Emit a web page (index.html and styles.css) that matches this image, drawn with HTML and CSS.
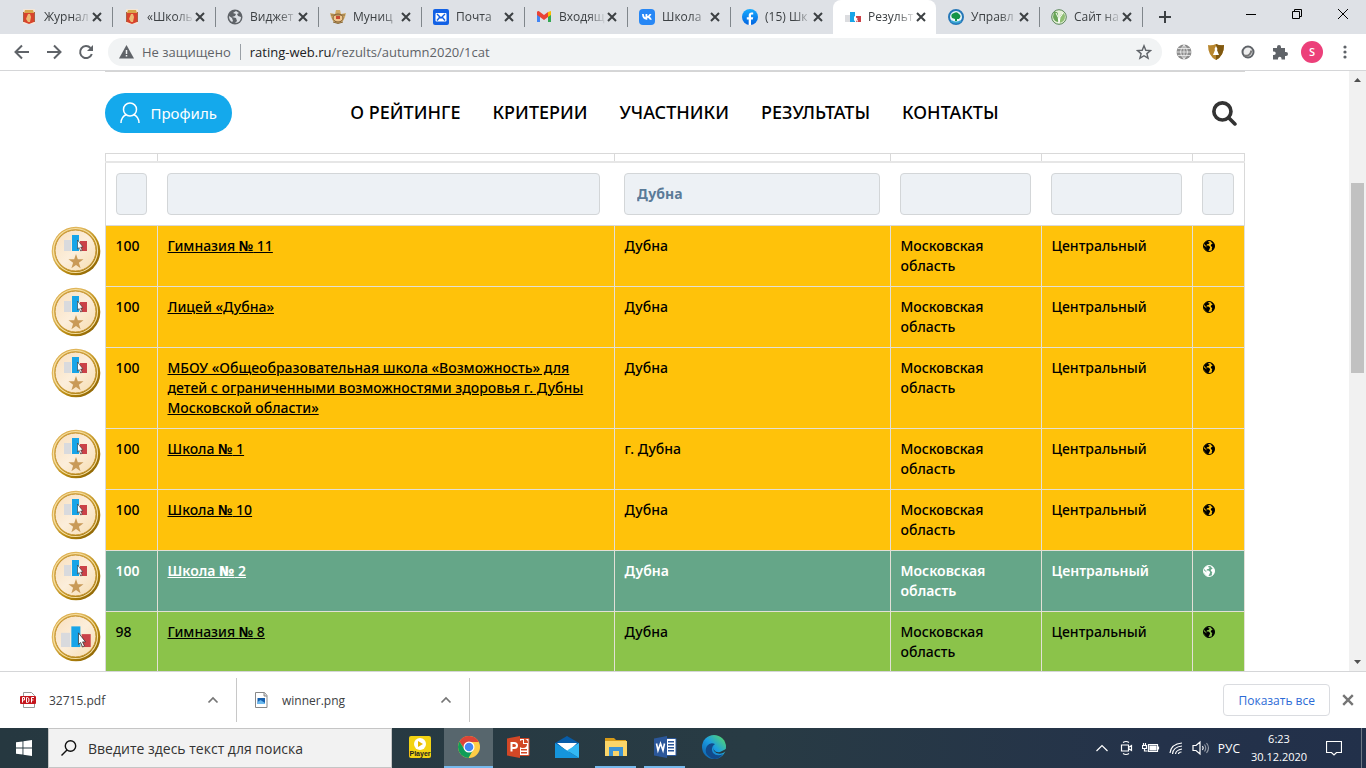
FILE: index.html
```html
<!DOCTYPE html>
<html lang="ru">
<head>
<meta charset="utf-8">
<title>Результаты</title>
<link rel="stylesheet" href="styles.css">
</head>
<body>
<svg class="defs" aria-hidden="true">
  <defs>
    <linearGradient id="gold" x1="0" y1="0" x2="1" y2="1"><stop offset="0" stop-color="#d39a2c"/><stop offset=".3" stop-color="#e3bb62"/><stop offset=".6" stop-color="#b98a10"/><stop offset="1" stop-color="#7d5700"/></linearGradient>
    <linearGradient id="cream" x1="0" y1="0" x2="1" y2="1"><stop offset="0" stop-color="#f8dfbd"/><stop offset=".5" stop-color="#fceedb"/><stop offset="1" stop-color="#f6dcae"/></linearGradient>
    <linearGradient id="fb" x1="0" y1="0" x2="0" y2="1"><stop offset="0" stop-color="#18acfe"/><stop offset="1" stop-color="#0163e0"/></linearGradient>
    <linearGradient id="edge" x1="0" y1="1" x2="1" y2="0"><stop offset="0" stop-color="#0c59a4"/><stop offset=".5" stop-color="#1b9de2"/><stop offset="1" stop-color="#5fe05a"/></linearGradient>
    <symbol id="x" viewBox="0 0 10 10"><path d="M1 1l8 8M9 1L1 9" fill="none" stroke="currentColor" stroke-width="2"/></symbol>
    <symbol id="up" viewBox="0 0 12 8"><path d="M1.500 6.500L6 2l4.500 4.500" fill="none" stroke="currentColor" stroke-width="1.700"/></symbol>
    <symbol id="bars" viewBox="0 0 24 18"><path fill="#d9dadd" d="M0 5h7v11H0z"/><path fill="#18a5e8" d="M8 0h7v16H8z"/><path fill="#cb4248" d="M16 6h7v10h-7z"/><path fill="#fff" stroke="#333" stroke-width=".6" d="M13.500 5v9l1.700-1.500 1.500 3.500 1.500-.7-1.500-3.300h2.300z"/></symbol>
    <symbol id="coin" viewBox="0 0 50 50"><circle cx="25" cy="25" r="24.300" fill="url(#gold)"/><circle cx="24.500" cy="24.500" r="22" fill="none" stroke="#f5dfa3" stroke-width="1.200"/><circle cx="24.500" cy="24.500" r="20.500" fill="url(#cream)" stroke="#c4922d"/></symbol>
    <symbol id="medal-star" viewBox="0 0 50 50"><use href="#coin" width="50" height="50"/><use href="#bars" x="13" y="9" width="24" height="18"/><path fill="#c99a58" d="M25 28l1.800 5.300h5.700l-4.600 3.400 1.700 5.500-4.600-3.300-4.600 3.300 1.700-5.500-4.600-3.400h5.700z"/></symbol>
    <symbol id="medal" viewBox="0 0 50 50"><use href="#coin" width="50" height="50"/><use href="#bars" x="10" y="14" width="31" height="24"/></symbol>
    <symbol id="globe" viewBox="0 0 12 12"><circle cx="6" cy="6" r="5.500" fill="none" stroke="currentColor"/><path fill="currentColor" d="M1 3.500Q2.500.8 6 .5L5 2l1.800.8L5.500 4 4 4.200 3.500 5.500h2L7.200 7 6.500 9l-1.300 2.400L3 10.500 1.200 8 .5 5 2.500 6.500 4 7.500zM7.500.7Q11.400 2 11.500 6q0 3-2.500 5L8.800 8.500 9.300 7 7.800 6 8 4.500l1.700-.7L8.500 2.500z"/></symbol>
    <symbol id="crest" viewBox="0 0 16 16"><path fill="#f4e6d8" d="M2 0h12v15H2z"/><path fill="#d9a64a" d="M4 1h8l1 3H3z"/><path fill="#d8432c" d="M3 4h10v9l-5 2-5-2z"/><path fill="#ecba73" d="M7 5h2l1 3-1 5H7l-2-3z"/><path stroke="#aa6041" fill="none" d="M2.500 3v10M13.500 3v10"/></symbol>
  </defs>
</svg>

<header class="tabs">
  <div class="tab"><svg class="fav" viewBox="0 0 16 16"><use href="#crest" width="16" height="16"/></svg><span class="tab-title">Журнал</span><button class="close" aria-label="Закрыть вкладку"><svg><use href="#x"/></svg></button></div>
  <div class="tab"><svg class="fav" viewBox="0 0 16 16"><use href="#crest" width="16" height="16"/></svg><span class="tab-title">«Школь</span><button class="close" aria-label="Закрыть вкладку"><svg><use href="#x"/></svg></button></div>
  <div class="tab"><svg class="fav" viewBox="0 0 16 16"><circle cx="8" cy="8" r="7.500" fill="#5f6368"/><path fill="#dee1e6" d="M9 2l-3 2 3 1-1 2-3 1 4 1 1 3-2 2c4 0 6-3 6-6l-3-1-1-2 2-1zM2 7l3 2 1 3-1 1C3 12 2 10 2 7z"/></svg><span class="tab-title">Виджет</span><button class="close" aria-label="Закрыть вкладку"><svg><use href="#x"/></svg></button></div>
  <div class="tab"><svg class="fav" viewBox="0 0 16 16"><path fill="#d0aa67" d="M0 4l5 1 1-4h4l1 4 5-1-1 4-2 4-2 2H5l-2-2-2-4z"/><ellipse cx="8" cy="9" rx="5" ry="4" fill="#f1c78c" stroke="#7c5b34"/><path fill="#c94a32" d="M6 7h4v3H6z"/><path d="M3 13q5 3 10 0M1 6h14" fill="none" stroke="#8a6a3a"/></svg><span class="tab-title">Муниц</span><button class="close" aria-label="Закрыть вкладку"><svg><use href="#x"/></svg></button></div>
  <div class="tab"><svg class="fav" viewBox="0 0 16 16"><rect width="16" height="16" rx="2" fill="#1261e5"/><rect x="2.500" y="4" width="11" height="8.500" rx="1" fill="#fff"/><path d="M4 5l4 4 4-4M4 11.500l2.500-3M12 11.500l-2.500-3" fill="none" stroke="#1261e5" stroke-width="1.400"/></svg><span class="tab-title">Почта</span><button class="close" aria-label="Закрыть вкладку"><svg><use href="#x"/></svg></button></div>
  <div class="tab"><svg class="fav" viewBox="0 0 16 16"><path fill="#4285f4" d="M1 4h3v9H1z"/><path fill="#34a853" d="M12 4h3v9h-3z"/><path fill="#fbbc04" d="M12 3l3-1v4l-3 2z"/><path fill="#ea4335" d="M1 3q1-2 3 0l4 3 4-3v5l-4 3-4-3-3-2z"/></svg><span class="tab-title">Входящ</span><button class="close" aria-label="Закрыть вкладку"><svg><use href="#x"/></svg></button></div>
  <div class="tab"><svg class="fav" viewBox="0 0 16 16"><rect width="16" height="16" rx="4" fill="#2787f5"/><path fill="#fff" d="M3 5h1.800c.1 2 .8 3 1.700 3.200V5h1.800v2C9.500 6.800 10 6 10.500 5h1.900c-.3 1.200-1 2.200-1.900 2.800 1 .5 1.800 1.400 2.300 2.900h-2c-.4-1-1.200-1.700-2.500-1.900v1.900C5 11 3.200 9 3 5z"/></svg><span class="tab-title">Школа</span><button class="close" aria-label="Закрыть вкладку"><svg><use href="#x"/></svg></button></div>
  <div class="tab no-line"><svg class="fav" viewBox="0 0 16 16"><circle cx="8" cy="8" r="8" fill="url(#fb)"/><path fill="#fff" d="M6.700 16v-5.500H4.800V8.200h1.900V6.500c0-2 1.200-3 2.900-3l1.600.1v2H10c-.8 0-1 .4-1 1v1.600h2.200l-.4 2.300H9V16z"/></svg><span class="tab-title">(15) Шк</span><button class="close" aria-label="Закрыть вкладку"><svg><use href="#x"/></svg></button></div>
  <div class="tab active"><svg class="fav" viewBox="0 0 16 16"><path fill="#dcdde0" d="M0 6h5v7H0z"/><path fill="#18a5e8" d="M5 3h5v10H5z"/><path fill="#cb4248" d="M11 7h5v6h-5z"/><path fill="#fff" d="M9 7v5l2-1 1 2 1-1-1-2h1z"/></svg><span class="tab-title">Результ</span><button class="close" aria-label="Закрыть вкладку"><svg><use href="#x"/></svg></button></div>
  <div class="tab"><svg class="fav" viewBox="0 0 16 16"><circle cx="8" cy="8" r="7" fill="#e9f6fb" stroke="#2778b8" stroke-width="2"/><path fill="#159447" d="M4 9q-2-4 2-5 3-2 5 1 3 2 0 5H9v2H7v-2z"/><path d="M3 12q5 3 10 0" stroke="#35a4d4" fill="none" stroke-width="2"/></svg><span class="tab-title">Управл</span><button class="close" aria-label="Закрыть вкладку"><svg><use href="#x"/></svg></button></div>
  <div class="tab"><svg class="fav" viewBox="0 0 16 16"><circle cx="8" cy="8" r="7.300" fill="#e4efd6" stroke="#598657"/><path fill="#6aa557" d="M3 3q4-1 4 3l1 7Q3 13 2 8z"/><path fill="#8fbf72" d="M13 4q-4 1-4 5l-1 5q6-1 6-7z"/><path d="M5 4q3 4 3 10 0-6 4-10" fill="none" stroke="#fff"/></svg><span class="tab-title">Сайт на</span><button class="close" aria-label="Закрыть вкладку"><svg><use href="#x"/></svg></button></div>
  <button class="new-tab" aria-label="Новая вкладка"><svg viewBox="0 0 12 12"><path d="M6 0v12M0 6h12" stroke="#3c4043" stroke-width="2"/></svg></button>
  <div class="window-buttons">
    <button aria-label="Свернуть"><svg viewBox="0 0 10 10"><path d="M0 5.500h10"/></svg></button>
    <button aria-label="Восстановить"><svg viewBox="0 0 10 10"><path d="M.5 2.500h7v7h-7zM2.500 2.500v-2h7v7h-2"/></svg></button>
    <button aria-label="Закрыть"><svg viewBox="0 0 10 10"><path d="M0 0l10 10M10 0L0 10"/></svg></button>
  </div>
</header>

<div class="toolbar">
  <button class="tool" aria-label="Назад"><svg viewBox="0 0 16 16"><path d="M15 8H2M8 1.500L1.500 8 8 14.500"/></svg></button>
  <button class="tool" aria-label="Вперёд"><svg viewBox="0 0 16 16"><path d="M1 8h13M8 1.500L14.500 8 8 14.500"/></svg></button>
  <button class="tool" aria-label="Обновить"><svg viewBox="0 0 16 16"><path d="M13.800 10A6 6 0 1 1 12.500 4"/><path class="solid" d="M15 1v6H9z"/></svg></button>
  <div class="omnibox">
    <svg class="warning" viewBox="0 0 15 14"><path fill="#5f6368" d="M7.500 0L15 13.500H0z"/><path stroke="#f1f3f4" stroke-width="1.500" d="M7.500 5v4M7.500 10v1.500"/></svg>
    <span class="insecure">Не защищено</span>
    <span class="url"><b>rating-web.ru</b>/rezults/autumn2020/1cat</span>
    <button class="star" aria-label="Добавить в закладки"><svg viewBox="0 0 16 16"><path d="M8 1.800l1.800 4.500 4.700.3-3.600 3 1.200 4.600L8 11.700l-4.100 2.500 1.200-4.600-3.600-3 4.700-.3z" fill="none" stroke="#5f6368" stroke-width="1.400"/></svg></button>
  </div>
  <div class="extensions">
    <button aria-label="Сеть"><svg viewBox="0 0 16 16"><circle cx="8" cy="8" r="7.500" fill="#8e8e8e"/><path d="M8 0v16M0 8h16M2 4.500h12M2 11.500h12M8 1q-7 7 0 14M8 1q7 7 0 14" fill="none" stroke="#f2f2f2" stroke-width=".8"/></svg></button>
    <button aria-label="Щит"><svg viewBox="0 0 16 16"><path fill="#b8862d" d="M0 1q4 1 8-1 4 2 8 1 0 11-8 15Q0 12 0 1z"/><path fill="#805810" d="M8 0q4 2 8 1 0 11-8 15z"/><path fill="#fff" d="M8 2l1.500 3-.5 1 2 5H5l2-5-.5-1z"/></svg></button>
    <button aria-label="Кольцо"><svg viewBox="0 0 16 16"><circle cx="8" cy="8" r="5.500" fill="#eee" stroke="#5f6368" stroke-width="2"/><path d="M4 11.500q6 1.500 7.500-5" fill="none" stroke="#777" stroke-width="2"/></svg></button>
    <button aria-label="Расширения"><svg viewBox="0 0 16 16"><path fill="#5f6368" d="M1 4h4V3a2 2 0 0 1 4 0v1h4v4h1a2 2 0 0 1 0 4h-1v3.500H9.500v-1a1.700 1.700 0 0 0-3.500 0v1H1V11h1a1.700 1.700 0 0 0 0-3.500H1z"/></svg></button>
    <button class="avatar">S</button>
    <button aria-label="Меню"><svg viewBox="0 0 16 16"><g fill="#5f6368"><circle cx="8" cy="3" r="1.600"/><circle cx="8" cy="8" r="1.600"/><circle cx="8" cy="13" r="1.600"/></g></svg></button>
  </div>
</div>

<div class="viewport">
  <main class="site">
    <div class="container">
      <div class="site-header">
        <div><button class="profile"><svg viewBox="0 0 20 22"><circle cx="10" cy="7.500" r="6.500"/><path d="M1 21q0-6 5.500-8.500M19 21q0-6-5.500-8.500"/></svg>Профиль</button></div>
        <nav class="menu"><a href="#">О РЕЙТИНГЕ</a><a href="#">КРИТЕРИИ</a><a href="#">УЧАСТНИКИ</a><a href="#">РЕЗУЛЬТАТЫ</a><a href="#">КОНТАКТЫ</a></nav>
        <button class="search" aria-label="Поиск"><svg viewBox="0 0 24 24"><circle cx="10" cy="10" r="8.200"/><path d="M16 16l6 6" stroke-linecap="round"/></svg></button>
      </div>
      <table class="results">
        <colgroup><col class="c-score"><col><col class="c-city"><col class="c-area"><col class="c-area"><col class="c-score"></colgroup>
        <thead>
          <tr class="stub"><th></th><th></th><th></th><th></th><th></th><th></th></tr>
          <tr class="filters"><td><input aria-label="Баллы"></td><td class="name"><input aria-label="Школа"></td><td><input aria-label="Город" value="Дубна"></td><td><input aria-label="Регион"></td><td><input aria-label="Округ"></td><td><input aria-label="Сайт"></td></tr>
        </thead>
        <tbody>
          <tr class="gold"><td><svg class="medal"><use href="#medal-star"/></svg>100</td><td><a href="#">Гимназия <b>№</b> 11</a></td><td>Дубна</td><td>Московская область</td><td>Центральный</td><td><a href="#" aria-label="Сайт"><svg class="globe"><use href="#globe"/></svg></a></td></tr>
          <tr class="gold"><td><svg class="medal"><use href="#medal-star"/></svg>100</td><td><a href="#">Лицей «Дубна»</a></td><td>Дубна</td><td>Московская область</td><td>Центральный</td><td><a href="#" aria-label="Сайт"><svg class="globe"><use href="#globe"/></svg></a></td></tr>
          <tr class="gold"><td><svg class="medal"><use href="#medal-star"/></svg>100</td><td><a href="#">МБОУ «Общеобразовательная школа «Возможность» для детей с ограниченными возможностями здоровья г. Дубны Московской области»</a></td><td>Дубна</td><td>Московская область</td><td>Центральный</td><td><a href="#" aria-label="Сайт"><svg class="globe"><use href="#globe"/></svg></a></td></tr>
          <tr class="gold"><td><svg class="medal"><use href="#medal-star"/></svg>100</td><td><a href="#">Школа <b>№</b> 1</a></td><td>г. Дубна</td><td>Московская область</td><td>Центральный</td><td><a href="#" aria-label="Сайт"><svg class="globe"><use href="#globe"/></svg></a></td></tr>
          <tr class="gold"><td><svg class="medal"><use href="#medal-star"/></svg>100</td><td><a href="#">Школа <b>№</b> 10</a></td><td>Дубна</td><td>Московская область</td><td>Центральный</td><td><a href="#" aria-label="Сайт"><svg class="globe"><use href="#globe"/></svg></a></td></tr>
          <tr class="current"><td><svg class="medal"><use href="#medal-star"/></svg>100</td><td><a href="#">Школа <b>№</b> 2</a></td><td>Дубна</td><td>Московская область</td><td>Центральный</td><td><a href="#" aria-label="Сайт"><svg class="globe"><use href="#globe"/></svg></a></td></tr>
          <tr class="green"><td><svg class="medal"><use href="#medal"/></svg>98</td><td><a href="#">Гимназия <b>№</b> 8</a></td><td>Дубна</td><td>Московская область</td><td>Центральный</td><td><a href="#" aria-label="Сайт"><svg class="globe"><use href="#globe"/></svg></a></td></tr>
        </tbody>
      </table>
    </div>
  </main>
  <div class="scrollbar">
    <svg viewBox="0 0 17 17"><path d="M5 11l3.500-4 3.500 4z"/></svg>
    <div class="track"><div class="thumb"></div></div>
    <svg viewBox="0 0 17 17"><path d="M5 6l3.500 4L12 6z"/></svg>
  </div>
</div>

<div class="downloads">
  <div class="file pdf"><svg viewBox="0 0 16 16"><path fill="#fff" stroke="#999" d="M3.500.5h8l3 3v12h-11z"/><rect y="4" width="16" height="8" rx="1" fill="#c5161d"/><path stroke="#fff" fill="none" d="M2.500 10.500v-5h2v2.500h-2M6.500 5.500v5h1q1.500 0 1.500-2.500T7.500 5.500zM11.500 10.500v-5H14M11.500 8h2"/></svg><span>32715.pdf</span><button aria-label="Действия"><svg><use href="#up"/></svg></button></div>
  <div class="file"><svg viewBox="0 0 16 16"><path fill="#fff" stroke="#888" d="M2.500.5h9l2.500 3v12H2.500z"/><path fill="#d8d8d8" stroke="#888" d="M11 .5V4h3"/><path fill="#155fae" d="M4.500 6h7.500v6H4.500z"/><path fill="#6bb9ee" d="M4.500 10l3-2 4.500 3v1H4.500z"/></svg><span>winner.png</span><button aria-label="Действия"><svg><use href="#up"/></svg></button></div>
  <button class="show-all">Показать все</button>
  <button class="hide-bar" aria-label="Закрыть панель"><svg><use href="#x"/></svg></button>
</div>

<footer class="taskbar">
  <button class="start" aria-label="Пуск"><svg viewBox="0 0 16 16"><path fill="#fff" d="M0 2.300L6.500 1.400v6.200H0zM7.400 1.300L16 0v7.600H7.400zM0 8.400h6.500v6.200L0 13.700zM7.400 8.400H16V16l-8.600-1.300z"/></svg></button>
  <label class="task-search"><svg viewBox="0 0 16 16"><circle cx="9.500" cy="6" r="5.200"/><path d="M6 10l-5.500 5.500"/></svg><input aria-label="Поиск Windows" placeholder="Введите здесь текст для поиска"></label>
  <div class="apps">
    <button aria-label="Player"><svg viewBox="0 0 24 24"><rect x="1" y="1" width="22" height="22" rx="2" fill="#f3d313"/><circle cx="12" cy="9" r="6" fill="#fff"/><path fill="#e8b800" d="M10 6l5 3-5 3z"/><text x="12" y="21" text-anchor="middle" class="tiny">Player</text></svg></button>
    <button class="open on" aria-label="Chrome"><svg viewBox="0 0 24 24"><circle cx="12" cy="12" r="11" fill="#ffcd46"/><path fill="#db4437" d="M2.500 6.500A11 11 0 0 1 21.800 7H12l-4.500 7z"/><path fill="#0f9d58" d="M2.500 6.500A11 11 0 0 0 11.500 23l4.800-8.500L12 17q-3 0-4.500-2.500z"/><circle cx="12" cy="12" r="5.500" fill="#fff"/><circle cx="12" cy="12" r="4.300" fill="#4285f4"/></svg></button>
    <button aria-label="PowerPoint"><svg viewBox="0 0 24 24"><path fill="#fff" stroke="#d24726" d="M12 3.500h11v17H12z"/><path fill="#d24726" d="M1 3.500L14 1v22L1 20.500zM15 14h6v1.500h-6zM15 17h6v1.500h-6zM17 5v4h4a4 4 0 1 1-4-4zM18 4q4 0 4 4h-4z"/><path d="M5.500 16.500V8H8q3 0 3 2.500T8 13H5.500" fill="none" stroke="#fff" stroke-width="2"/></svg></button>
    <button aria-label="Почта"><svg viewBox="0 0 24 24"><path fill="#075ca8" d="M0 8l12-7 12 7v4H0z"/><path fill="#fff" d="M2 8h20l-9 9z"/><path fill="#1595dc" d="M0 8l24 15H0z"/><path fill="#32b9f4" d="M24 8L12 15.500 24 23z"/></svg></button>
    <button class="open" aria-label="Проводник"><svg viewBox="0 0 24 24"><path fill="#d89b18" d="M1 3h9l2 2h10v3H1z"/><path fill="#fbd568" d="M1 6h22v15H1z"/><path fill="#3c93d3" d="M5 12h14v9h-4v-5H9v5H5z"/></svg></button>
    <button class="open" aria-label="Word"><svg viewBox="0 0 24 24"><path fill="#fff" stroke="#2b579a" d="M12 3.500h11v17H12z"/><path fill="#2b579a" d="M1 3.500L14 1v22L1 20.500zM15 6h6v1.500h-6zM15 9h6v1.500h-6zM15 12h6v1.500h-6zM15 15h6v1.500h-6z"/><path d="M3.500 8.500l1.500 7 2.500-7 2.500 7 1.500-7" fill="none" stroke="#fff" stroke-width="1.600"/></svg></button>
    <button aria-label="Edge"><svg viewBox="0 0 24 24"><circle cx="12" cy="12" r="12" fill="url(#edge)"/><path fill="#114a8b" d="M9 23Q1 18 5 11q3-4 8-2-5 3-2 9 4 4 10 1-5 7-12 4z"/><path fill="#263840" d="M13 9q-3 2-1 6 2 3 6 2l6-3v2l-3 2q-6 2-9-2-2-5 1-7z"/></svg></button>
  </div>
  <div class="tray">
    <svg viewBox="0 0 16 16"><path d="M2.500 11L8 5.500l5.500 5.500"/></svg>
    <svg viewBox="0 0 16 16"><path d="M3.500 5h7v6h-7zM10.500 7.500l3-2v5l-3-2M5 2.500q3-2 6 0M5 13.500q3 2 6 0"/></svg>
    <svg class="battery" viewBox="0 0 18 16"><path d="M6.500 4.500h9v7h-9zM16.500 6.500v3"/><path d="M8 6h6v4H8z" fill="#fff"/><path d="M.5 5.500h4v3h-4zM1.500 3v2M3.500 3v2M2.500 9v2h3"/></svg>
    <svg viewBox="0 0 16 16"><path d="M2 13Q3 4 14 3M4.500 14Q5 7 14 6M7.500 14Q8 10 14 9M10.500 14q0-2 3-2"/></svg>
    <svg class="volume" viewBox="0 0 18 16"><path d="M1 5.500h3l4-3.500v12l-4-3.500H1zM10.500 6q1.500 2 0 4"/><path d="M12.500 4.500q2.500 3.500 0 7M14.500 3q4 5 0 10" opacity=".5"/></svg>
    <span class="lang">РУС</span>
    <div class="clock"><time>6:23</time><time>30.12.2020</time></div>
    <button class="notes" aria-label="Уведомления"><svg viewBox="0 0 16 16"><path d="M.5 1.500h15v11h-5L8 15l-2.500-2.500h-5z"/></svg></button>
  </div>
</footer>
</body>
</html>
```
FILE: styles.css
```css
* { box-sizing: border-box; }
body { margin: 0; height: 100vh; display: flex; flex-direction: column; overflow: hidden; background: #fff; font-family: "Open Sans", "Noto Sans", sans-serif; font-size: 12px; color: #3c4043; }
button { border: 0; padding: 0; margin: 0; background: none; font: inherit; color: inherit; display: flex; align-items: center; justify-content: center; }
input { font: inherit; min-width: 0; }
svg { display: block; flex: none; }
.defs { position: absolute; width: 0; height: 0; }

.tabs { height: 34px; flex: none; display: flex; align-items: stretch; background: #dee1e6; padding-left: 9px; }
.tab { width: 103px; flex: none; display: flex; align-items: center; padding: 0 10px 0 12px; position: relative; }
.tab::after { content: ""; position: absolute; right: -1px; top: 7px; height: 20px; width: 1px; background: #80868b; }
.tab.no-line::after, .tab.active::after { display: none; }
.tab.active { background: #fff; border-radius: 8px 8px 0 0; }
.fav { width: 16px; height: 16px; margin-right: 7px; }
.tab-title { flex: 1; min-width: 0; white-space: nowrap; line-height: 18px; -webkit-mask-image: linear-gradient(to right, #000 60%, transparent); mask-image: linear-gradient(to right, #000 60%, transparent); }
.close svg { width: 10px; height: 10px; }
.new-tab { width: 46px; }
.new-tab svg { width: 12px; height: 12px; }
.window-buttons { margin-left: auto; display: flex; height: 28px; }
.window-buttons button { width: 46px; }
.window-buttons svg { width: 10px; height: 10px; fill: none; stroke: #000; overflow: visible; }

.toolbar { height: 37px; flex: none; display: flex; align-items: center; padding: 0 11px 1px 6px; border-bottom: 1px solid #d5d6d8; }
.tool { width: 32px; height: 28px; }
.tool svg { width: 16px; height: 16px; fill: none; stroke: #5f6368; stroke-width: 2; }
.tool .solid { fill: #5f6368; stroke: none; }
.omnibox { flex: 1; height: 28px; margin-left: 6px; border-radius: 14px; background: #f1f3f4; display: flex; align-items: center; padding: 0 10px 0 11px; font-size: 13px; color: #5f6368; }
.warning { width: 15px; height: 14px; margin-right: 8px; }
.insecure { padding-right: 9px; border-right: 1px solid #9aa0a6; line-height: 16px; }
.url { margin-left: 9px; flex: 1; }
.url b { font-weight: 400; color: #202124; }
.star svg { width: 16px; height: 16px; }
.extensions { display: flex; align-items: center; margin-left: 6px; }
.extensions button { width: 32px; height: 28px; }
.extensions button:last-child { width: 20px; margin-left: 12px; }
.extensions svg { width: 16px; height: 16px; }
.extensions .avatar { width: 22px; height: 22px; margin-left: 5px; border-radius: 50%; background: #ec407a; color: #fff; font-size: 11px; font-weight: 600; }

.viewport { flex: 1; min-height: 0; display: flex; }
.site { flex: 1; overflow: hidden; color: #000; font-family: "Noto Sans", "Open Sans", sans-serif; }
.container { max-width: 1140px; margin: 0 auto; }
.site-header { display: grid; grid-template-columns: 1fr auto 1fr; align-items: center; border-top: 1px solid #d5d5d5; padding: 21px 0 20px; }
.profile { height: 40px; padding: 0 15px; gap: 11px; border-radius: 20px; background: #14a9ec; color: #fff; font-size: 15px; }
.profile svg { width: 20px; height: 22px; fill: none; stroke: #fff; stroke-width: 1.5; }
.menu { display: flex; gap: 32px; padding-bottom: 2px; font-size: 18px; font-weight: 500; line-height: 24px; }
.menu a { color: #000; text-decoration: none; }
.search { justify-self: end; margin-right: 8px; }
.search svg { width: 25px; height: 25px; fill: none; stroke: #333; stroke-width: 3.5; }

.results { width: 100%; table-layout: fixed; border-collapse: collapse; font-size: 14px; line-height: 20px; font-weight: 500; }
.c-score { width: 52px; }
.c-city { width: 276px; }
.c-area { width: 151px; }
.results th, .results td { border: 1px solid #d9d9d9; padding: 10px; text-align: left; vertical-align: top; }
.results .stub th { height: 8px; padding: 0; border-bottom: 2px solid #e6e6e6; }
.results .filters td { border-left: 0; border-right: 0; }
.results .filters td:first-child { border-left: 1px solid #d9d9d9; }
.results .filters td:last-child { border-right: 1px solid #d9d9d9; }
.results .filters .name { padding-right: 14px; }
.filters input { display: block; width: 100%; height: 42px; padding: 0 12px; border: 1px solid #d3d6d8; border-radius: 4px; background: #edf1f5; color: #5b7b98; font-weight: 700; }
.results tbody td { border-color: #e3e0d6; }
.results tbody td:first-child { position: relative; border-left-color: #d9d9d9; }
.results a { color: inherit; }
.medal { position: absolute; left: -55px; top: 0; width: 50px; height: 50px; }
.globe { width: 12px; height: 12px; margin-top: 4px; }
.gold { background: #ffc20a; }
.current { background: #65a688; color: #fff; font-weight: 600; }
.green { background: #8bc34a; }

.scrollbar { width: 17px; display: flex; flex-direction: column; background: #f1f1f1; }
.scrollbar svg { width: 17px; height: 17px; fill: #505050; }
.track { flex: 1; display: grid; grid-template-rows: 95fr 190fr 281fr; }
.thumb { grid-row: 2; margin: 0 2px; background: #c1c1c1; }

.downloads { height: 57px; flex: none; display: flex; align-items: center; border-top: 1px solid #d5d6d8; padding-right: 12px; }
.file { display: flex; align-items: center; width: 233px; height: 44px; padding: 0 17px 0 16px; border-right: 1px solid #c8c8c8; }
.file.pdf { width: 237px; padding-left: 20px; }
.file > svg { width: 16px; height: 16px; margin-right: 13px; }
.file span { flex: 1; }
.file button { color: #757575; }
.file button svg { width: 12px; height: 8px; }
.show-all { margin-left: auto; height: 32px; padding: 0 14px; border: 1px solid #dadce0; border-radius: 4px; color: #2b6bd6; }
.hide-bar { margin-left: 12px; color: #757575; }
.hide-bar svg { width: 12px; height: 12px; }

.taskbar { height: 40px; flex: none; display: flex; background: linear-gradient(to right, #263840, #283b44 55%, #24324a 85%, #22304a); color: #fff; }
.start { width: 48px; }
.start svg { width: 16px; height: 16px; }
.task-search { width: 344px; display: flex; align-items: center; gap: 11px; padding: 0 12px; background: #f2f2f2; border: 1px solid #c5c5c5; }
.task-search svg { width: 16px; height: 16px; fill: none; stroke: #111; stroke-width: 1.4; }
.task-search input { flex: 1; border: 0; background: none; padding: 0; font-size: 14px; }
.task-search input::placeholder { color: #333; opacity: 1; }
.apps { display: flex; margin-left: 3px; }
.apps button { width: 49px; border-bottom: 2px solid transparent; }
.apps .open { width: 41px; margin: 0 4px; border-bottom-color: #76b9ed; }
.apps .on { width: 49px; margin: 0; background: #57666d; }
.apps svg { width: 24px; height: 24px; }
.tiny { font: 700 7px "Liberation Sans", sans-serif; fill: #222; }
.tray { margin-left: auto; display: flex; align-items: center; gap: 8px; padding-right: 4px; }
.tray svg { width: 16px; height: 16px; fill: none; stroke: #fff; stroke-width: 1.2; }
.tray .battery, .tray .volume { width: 18px; }
.clock { width: 62px; display: flex; flex-direction: column; align-items: center; line-height: 18px; font-size: 11px; }
.notes { width: 44px; height: 40px; border-right: 1px solid #6e7885; padding-right: 12px; }
```
